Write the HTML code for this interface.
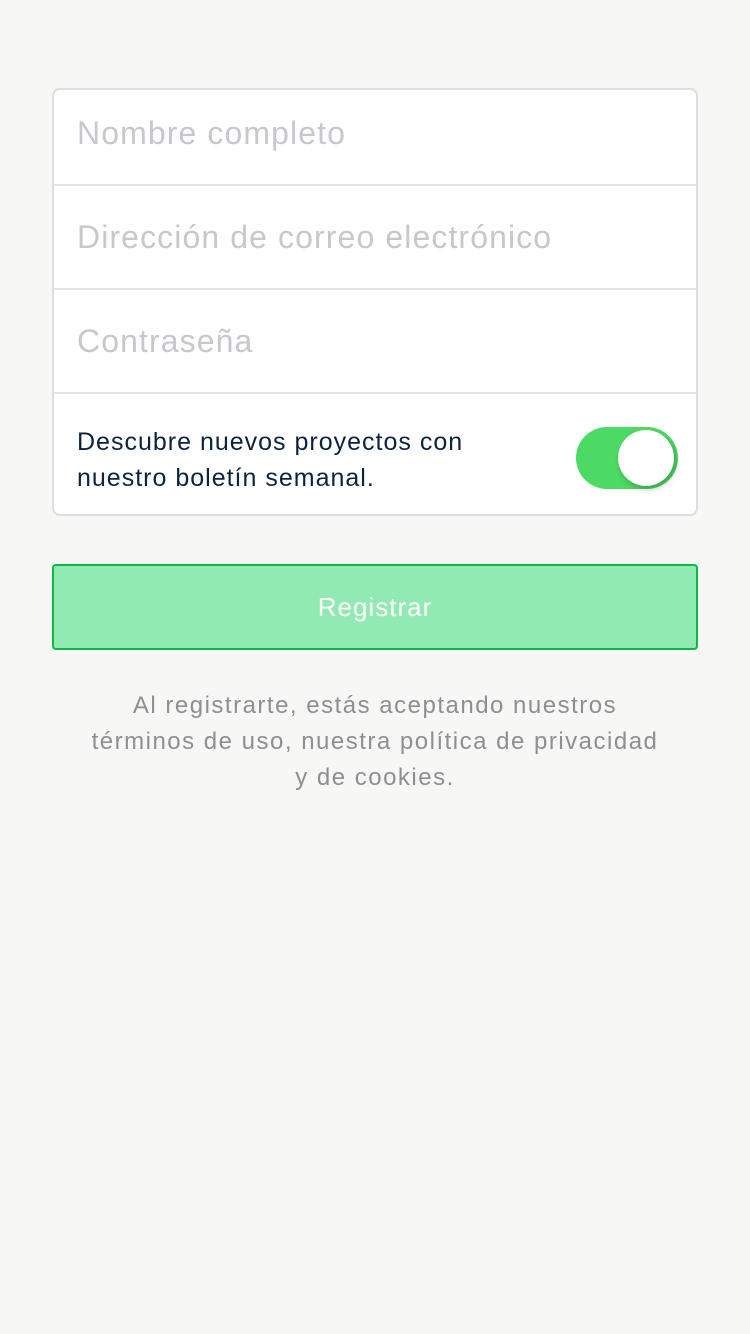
<!DOCTYPE html>
<html><head><meta charset="utf-8"><style>
*{margin:0;padding:0;box-sizing:border-box}
body{width:750px;height:1334px;background:#f7f7f5;font-family:"Liberation Sans",sans-serif;position:relative;overflow:hidden}
.card{position:absolute;left:52px;top:88px;width:646px;height:428px;background:#fff;border:2px solid #dedede;border-radius:8px;overflow:hidden}
.row{position:absolute;left:0;right:0;height:104px;border-bottom:2px solid #e2e2e2;color:#c7c7cc;font-size:32px;letter-spacing:1.1px;padding-left:23px;line-height:86px}
.tg{position:absolute;left:23px;top:334px;font-size:25px;letter-spacing:1px;line-height:36px;color:#0c2340}
.sw{position:absolute;left:522px;top:337px;width:102px;height:62px;border-radius:31px;background:#4cd964}
.knob{position:absolute;left:42px;top:3px;width:56px;height:56px;border-radius:50%;background:#fff;box-shadow:2px 3px 6px rgba(0,0,0,.25)}
.btn{position:absolute;left:52px;top:564px;width:646px;height:86px;background:#92eab3;border:2px solid #0cb944;border-radius:4px;color:#fff;font-size:26px;letter-spacing:1px;text-align:center;line-height:82px}
.foot{position:absolute;left:0;width:750px;top:688px;text-align:center;color:#8e8e93;font-size:24px;letter-spacing:1.5px;line-height:36px}
</style></head><body>
<div class="card">
<div class="row" style="top:0;height:96px">Nombre completo</div>
<div class="row" style="top:96px;line-height:102px">Dirección de correo electrónico</div>
<div class="row" style="top:200px;line-height:102px">Contraseña</div>
<div class="tg">Descubre nuevos proyectos con<br>nuestro boletín semanal.</div>
<div class="sw"><div class="knob"></div></div>
</div>
<div class="btn">Registrar</div>
<div class="foot">Al registrarte, estás aceptando nuestros<br>términos de uso, nuestra política de privacidad<br>y de cookies.</div>
</body></html>
